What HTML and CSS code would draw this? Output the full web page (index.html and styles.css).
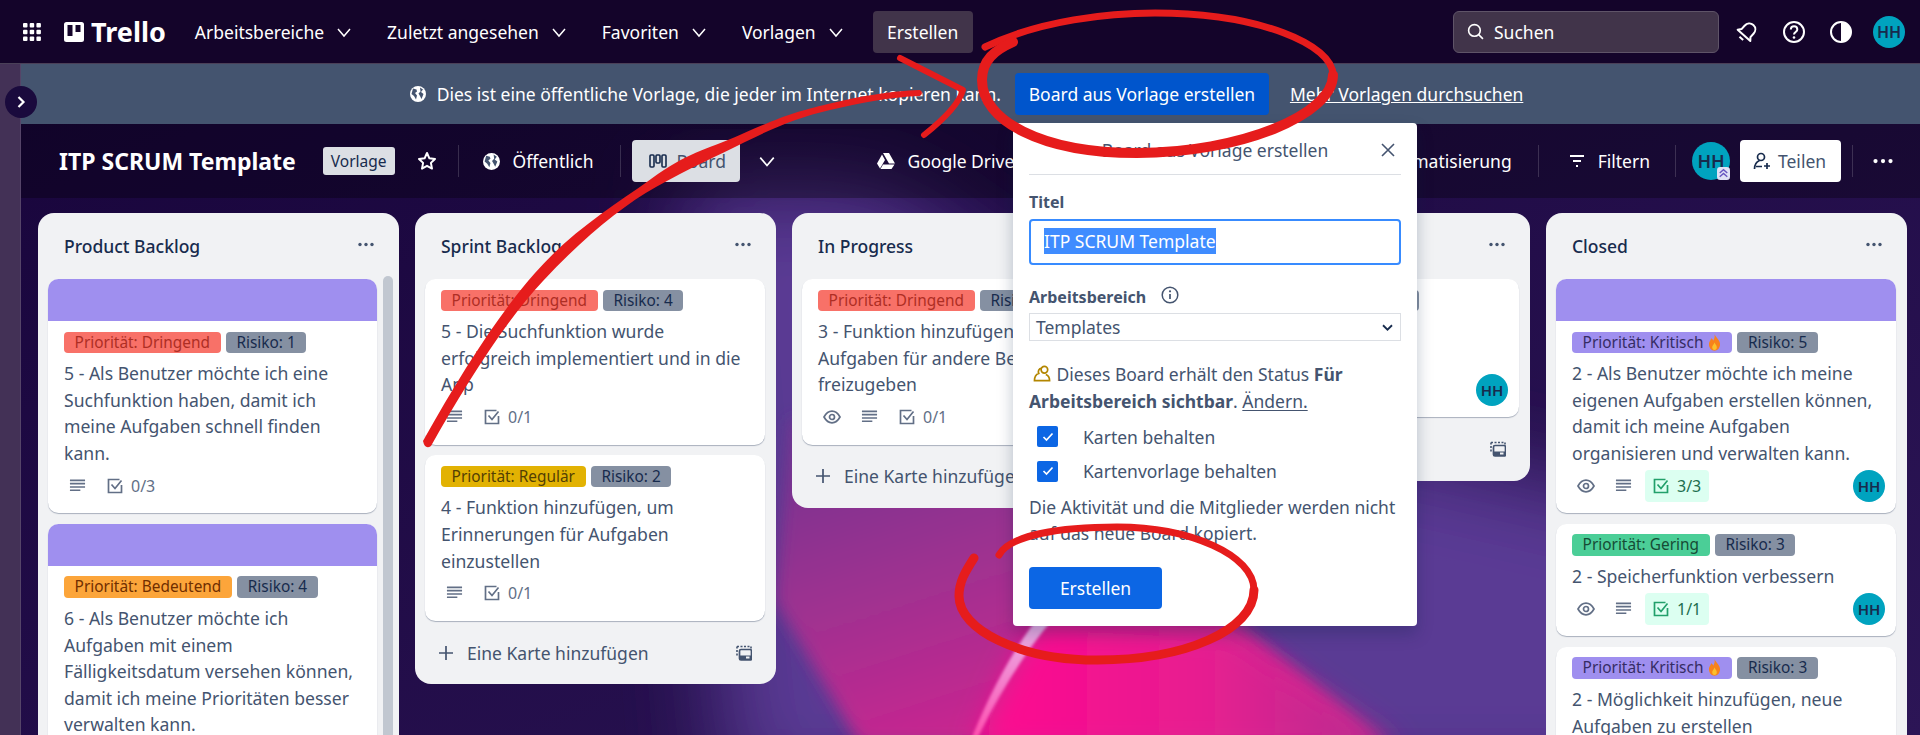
FILE: index.html
```html
<!DOCTYPE html>
<html lang="de">
<head>
  <meta charset="UTF-8" />
  <meta name="viewport" content="width=device-width, initial-scale=1" />
  <title>ITP SCRUM Template | Trello</title>
  <link rel="stylesheet" href="styles.css">
</head>
<body>
  <svg class="sprite" width="0" height="0">
    <symbol id="chev" viewBox="0 0 16 16"><path d="M2 5l6 7 6-7" fill="none" stroke="currentColor" stroke-width="1.5"/></symbol>
    <symbol id="globe" viewBox="0 0 16 16"><circle cx="8" cy="8" r="8" fill="currentColor"/><path d="M3 2.500l3.500 1 .5 2-2 1.500 2 2.500-1 4-2-3.500-2.500-2zM10 1.500l3 2-2 2.500 2.500 2-2 5-1.500-3-1.500-2.500 2-2z" fill="#44546f"/></symbol>
    <symbol id="desc" viewBox="0 0 18 16"><path d="M1 2h16M1 5.500h16M1 9h16M1 12.500h11" fill="none" stroke="currentColor" stroke-width="1.700"/></symbol>
    <symbol id="check" viewBox="0 0 16 16"><path d="M14.500 7v7.500h-13v-13h11" fill="none" stroke="currentColor" stroke-width="1.700"/><path d="M4.500 6.500l3.500 4 6.500-8" fill="none" stroke="currentColor" stroke-width="1.700"/></symbol>
    <symbol id="eye" viewBox="0 0 18 14"><path d="M1 7c2-3.600 4.800-5.800 8-5.800S15 3.400 17 7c-2 3.600-4.800 5.800-8 5.800S3 10.600 1 7z" fill="none" stroke="currentColor" stroke-width="1.700"/><circle cx="9" cy="7" r="2.500" fill="none" stroke="currentColor" stroke-width="1.700"/></symbol>
    <symbol id="dots" viewBox="0 0 16 4"><circle cx="2" cy="2" r="1.700" fill="currentColor"/><circle cx="8" cy="2" r="1.700" fill="currentColor"/><circle cx="14" cy="2" r="1.700" fill="currentColor"/></symbol>
    <symbol id="plus" viewBox="0 0 16 16"><path d="M8 1v14M1 8h14" fill="none" stroke="currentColor" stroke-width="1.700"/></symbol>
    <symbol id="tmpl" viewBox="0 0 16 16"><path d="M1 1.500h14M1 1.500v10M15 1.500v3" fill="none" stroke="currentColor" stroke-width="1.600" stroke-dasharray="2 1.500"/><rect x="3.500" y="4.500" width="12" height="10.500" rx="1.500" fill="none" stroke="currentColor" stroke-width="1.700"/><rect x="3.500" y="10.500" width="12" height="4.500" fill="currentColor"/><rect x="10" y="11.500" width="3.500" height="2" fill="#f1f2f4"/></symbol>
    <symbol id="flame" viewBox="0 0 14 18"><path d="M7 0c1 3 6 6 6 11 0 4-3 7-6 7s-6-3-6-7c0-3 2-4 2.500-6.500C5 5.500 5.500 6.500 5.500 7 7 5 7.500 3 7 0z" fill="#f7821b"/><path d="M7 9c.5 1.500 2.500 3 2.500 5S8.500 17 7 17s-2.500-1.500-2.500-3S6.500 11 7 9z" fill="#fbc02d"/></symbol>
  </svg>

  <svg class="backdrop" viewBox="0 0 1920 735" preserveAspectRatio="none">
    <defs>
      <linearGradient id="baseBg" x1="0" y1="0" x2="1" y2="1">
        <stop offset="0" stop-color="#17043a"/>
        <stop offset="1" stop-color="#2c1556"/>
      </linearGradient>
      <linearGradient id="magentaBg" x1="0" y1="0" x2="0.6" y2="1">
        <stop offset="0" stop-color="#6f3590"/>
        <stop offset="0.55" stop-color="#a82f90"/>
        <stop offset="1" stop-color="#d9208f"/>
      </linearGradient>
      <linearGradient id="pinkBg" x1="0" y1="0" x2="1" y2="0">
        <stop offset="0" stop-color="#ff0590"/>
        <stop offset="0.55" stop-color="#e61f90"/>
        <stop offset="1" stop-color="#b02f90"/>
      </linearGradient>
      <linearGradient id="finBg" x1="0" y1="0" x2="0" y2="1">
        <stop offset="0" stop-color="#e8b4ea"/>
        <stop offset="1" stop-color="#ff50b0"/>
      </linearGradient>
      <filter id="blurBig"><feGaussianBlur stdDeviation="45"/></filter>
      <filter id="blurMid"><feGaussianBlur stdDeviation="14"/></filter>
      <filter id="blurSoft"><feGaussianBlur stdDeviation="8"/></filter>
      <filter id="blurFin"><feGaussianBlur stdDeviation="1.500"/></filter>
    </defs>
    <rect width="1920" height="735" fill="url(#baseBg)"/>
    <polygon points="680,190 880,190 1180,400 1800,540 1800,800 730,800" fill="#5a3a94" filter="url(#blurBig)"/>
    <polygon points="790,420 1040,440 1240,625 1385,745 860,745 775,600" fill="url(#magentaBg)" filter="url(#blurSoft)"/>
    <path d="M1040 620 L1225 630 L1400 750 L975 750 Q1010 665 1040 620z" fill="url(#pinkBg)" filter="url(#blurMid)"/>
    <path d="M1036 620 Q1000 668 972 737 L978 737 Q1012 668 1052 620z" fill="url(#finBg)" filter="url(#blurFin)"/>
  </svg>

  <header class="topbar">
    <svg class="grid-icon" viewBox="0 0 18 18"><g fill="#fff"><rect width="4.500" height="4.500" rx="1"/><rect x="6.700" width="4.500" height="4.500" rx="1"/><rect x="13.400" width="4.500" height="4.500" rx="1"/><rect y="6.700" width="4.500" height="4.500" rx="1"/><rect x="6.700" y="6.700" width="4.500" height="4.500" rx="1"/><rect x="13.400" y="6.700" width="4.500" height="4.500" rx="1"/><rect y="13.400" width="4.500" height="4.500" rx="1"/><rect x="6.700" y="13.400" width="4.500" height="4.500" rx="1"/><rect x="13.400" y="13.400" width="4.500" height="4.500" rx="1"/></g></svg>
    <div class="logo">
      <svg viewBox="0 0 20 20"><path fill-rule="evenodd" d="M2.500 0h15A2.500 2.500 0 0 1 20 2.500v15a2.500 2.500 0 0 1-2.500 2.500h-15A2.500 2.500 0 0 1 0 17.500v-15A2.500 2.500 0 0 1 2.500 0zM3.500 3v11h5V3zM11.500 3v7h5V3z" fill="#fff"/></svg>
      <span>Trello</span>
    </div>
    <nav class="nav">
      <a>Arbeitsbereiche <svg><use href="#chev"/></svg></a>
      <a>Zuletzt angesehen <svg><use href="#chev"/></svg></a>
      <a>Favoriten <svg><use href="#chev"/></svg></a>
      <a>Vorlagen <svg><use href="#chev"/></svg></a>
    </nav>
    <button class="create-btn">Erstellen</button>
    <div class="search">
      <svg viewBox="0 0 16 16"><circle cx="7" cy="7" r="5.500" fill="none" stroke="currentColor" stroke-width="1.500"/><path d="M11 11l4 4" stroke="currentColor" stroke-width="1.500"/></svg>
      <span>Suchen</span>
    </div>
    <svg class="top-icon bell" viewBox="0 0 22 22"><g fill="none" stroke="#fff" stroke-width="2" stroke-linejoin="round" transform="rotate(42 11 11)"><path d="M11 1.500c-3.700 0-6 3-6 6.500v4.500l-2.500 3h17l-2.500-3V8c0-3.500-2.300-6.500-6-6.500z"/><path d="M8.500 19.500h5"/></g></svg>
    <svg class="top-icon" viewBox="0 0 22 22"><circle cx="11" cy="11" r="10" fill="none" stroke="#fff" stroke-width="2"/><path d="M7.800 8.500c0-4.300 6.500-4.300 6.500 0 0 2.500-3.300 2.500-3.300 5" fill="none" stroke="#fff" stroke-width="2"/><circle cx="11" cy="16.500" r="1.300" fill="#fff"/></svg>
    <svg class="top-icon" viewBox="0 0 22 22"><circle cx="11" cy="11" r="10" fill="none" stroke="#fff" stroke-width="2"/><path d="M11 1a10 10 0 0 1 0 20z" fill="#fff"/></svg>
    <div class="avatar avatar-top">HH</div>
  </header>

  <div class="layout">
    <aside class="sidebar"></aside>
    <button class="side-toggle"><svg viewBox="0 0 10 14"><path d="M2.500 2l5 5-5 5" fill="none" stroke="#fff" stroke-width="2.200"/></svg></button>

    <main class="main">
      <div class="banner">
        <svg class="banner-globe"><use href="#globe"/></svg>
        <span>Dies ist eine öffentliche Vorlage, die jeder im Internet kopieren kann.</span>
        <button class="banner-btn">Board aus Vorlage erstellen</button>
        <a class="banner-link">Mehr Vorlagen durchsuchen</a>
      </div>

      <div class="boardbar">
        <h1 class="board-title">ITP SCRUM Template</h1>
        <span class="badge">Vorlage</span>
        <svg class="star" viewBox="0 0 20 20"><path d="M10 2l2.400 5.300 5.600.700-4.100 3.900 1.100 5.700-5-2.800-5 2.800 1.100-5.700L2 8l5.600-.7z" fill="none" stroke="#fff" stroke-width="2" stroke-linejoin="round"/></svg>
        <i class="sep"></i>
        <svg class="bar-globe"><use href="#globe"/></svg>
        <span class="bar-text">Öffentlich</span>
        <i class="sep sep-b"></i>
        <button class="board-btn">
          <svg viewBox="0 0 18 14"><g fill="none" stroke="#172b4d" stroke-width="1.600"><rect x="1" y="1" width="4" height="12" rx="1"/><rect x="7" y="1" width="4" height="8" rx="1"/><rect x="13" y="1" width="4" height="12" rx="1"/></g></svg>
          <span>Board</span>
        </button>
        <svg class="bar-chev"><use href="#chev"/></svg>
        <svg class="drive" viewBox="0 0 18 16"><path d="M6 0h6l6 10.500h-6zM5 1.500L8 7 3 15.500 0 10.500zM6 11.500h11.500l-3 4.500H3.500z" fill="#fff"/></svg>
        <span class="bar-text">Google Drive</span>

        <div class="bar-right">
          <span class="bar-text">Automatisierung</span>
          <i class="sep sep-auto"></i>
          <svg class="filter-icon" viewBox="0 0 16 14"><path d="M1 2h14M4 7h8M7 12h2" fill="none" stroke="#fff" stroke-width="1.800"/></svg>
          <span class="bar-text">Filtern</span>
          <i class="sep sep-filter"></i>
          <div class="avatar avatar-bar">HH
            <svg class="admin-chip" viewBox="0 0 12 12"><rect width="12" height="12" rx="3" fill="#dfe1f5"/><path d="M2.500 5.500L6 2.500l3.500 3M2.500 9L6 6l3.500 3" fill="none" stroke="#6554c0" stroke-width="1.300"/></svg>
          </div>
          <button class="share-btn">
            <svg viewBox="0 0 18 18"><g fill="none" stroke="#172b4d" stroke-width="1.700"><circle cx="8" cy="5" r="3.500"/><path d="M1.500 17c0-4.500 1.500-7 5-8.500M9 14.500h-6"/><path d="M14 11v6M11 14h6"/></g></svg>
            <span>Teilen</span>
          </button>
          <i class="sep sep-share"></i>
          <svg class="bar-dots"><use href="#dots"/></svg>
        </div>
      </div>

      <div class="lists">
        <section class="list">
          <div class="list-head"><h2>Product Backlog</h2><svg><use href="#dots"/></svg></div>
          <div class="list-scroll">
            <div class="scroll-cards">
              <article class="card">
                <div class="cover"></div>
                <div class="card-body">
                  <div class="labels"><span class="label red">Priorität: Dringend</span><span class="label grey">Risiko: 1</span></div>
                  <p>5 - Als Benutzer möchte ich eine Suchfunktion haben, damit ich meine Aufgaben schnell finden kann.</p>
                  <div class="meta"><svg class="m-ico"><use href="#desc"/></svg><span class="pill"><svg><use href="#check"/></svg>0/3</span></div>
                </div>
              </article>
              <article class="card">
                <div class="cover"></div>
                <div class="card-body">
                  <div class="labels"><span class="label orange">Priorität: Bedeutend</span><span class="label grey">Risiko: 4</span></div>
                  <p>6 - Als Benutzer möchte ich Aufgaben mit einem Fälligkeitsdatum versehen können, damit ich meine Prioritäten besser verwalten kann.</p>
                </div>
              </article>
            </div>
            <div class="scrollbar"></div>
          </div>
        </section>

        <section class="list">
          <div class="list-head"><h2>Sprint Backlog</h2><svg><use href="#dots"/></svg></div>
          <article class="card">
            <div class="card-body">
              <div class="labels"><span class="label red">Priorität: Dringend</span><span class="label grey">Risiko: 4</span></div>
              <p>5 - Die Suchfunktion wurde erfolgreich implementiert und in die App</p>
              <div class="meta"><svg class="m-ico"><use href="#desc"/></svg><span class="pill"><svg><use href="#check"/></svg>0/1</span></div>
            </div>
          </article>
          <article class="card">
            <div class="card-body">
              <div class="labels"><span class="label yellow">Priorität: Regulär</span><span class="label grey">Risiko: 2</span></div>
              <p>4 - Funktion hinzufügen, um Erinnerungen für Aufgaben einzustellen</p>
              <div class="meta"><svg class="m-ico"><use href="#desc"/></svg><span class="pill"><svg><use href="#check"/></svg>0/1</span></div>
            </div>
          </article>
          <div class="add-row"><svg class="add-plus"><use href="#plus"/></svg><span>Eine Karte hinzufügen</span><svg class="add-tmpl"><use href="#tmpl"/></svg></div>
        </section>

        <section class="list">
          <div class="list-head"><h2>In Progress</h2><svg><use href="#dots"/></svg></div>
          <article class="card">
            <div class="card-body">
              <div class="labels"><span class="label red">Priorität: Dringend</span><span class="label grey">Risiko: 3</span></div>
              <p>3 - Funktion hinzufügen, um Aufgaben für andere Benutzer freizugeben</p>
              <div class="meta"><svg class="m-ico m-eye"><use href="#eye"/></svg><svg class="m-ico"><use href="#desc"/></svg><span class="pill"><svg><use href="#check"/></svg>0/1</span></div>
            </div>
          </article>
          <div class="add-row"><svg class="add-plus"><use href="#plus"/></svg><span>Eine Karte hinzufügen</span><svg class="add-tmpl"><use href="#tmpl"/></svg></div>
        </section>

        <!-- this list sits behind the popover, only its right edge shows -->
        <section class="list">
          <div class="list-head list-head-end"><svg><use href="#dots"/></svg></div>
          <article class="card">
            <div class="card-body">
              <div class="labels"><span class="label grey label-blank"></span></div>
              <div class="blank-text"></div>
              <div class="meta"><div class="avatar avatar-card">HH</div></div>
            </div>
          </article>
          <div class="add-row add-row-end"><svg class="add-tmpl"><use href="#tmpl"/></svg></div>
        </section>

        <section class="list">
          <div class="list-head"><h2>Closed</h2><svg><use href="#dots"/></svg></div>
          <article class="card">
            <div class="cover"></div>
            <div class="card-body">
              <div class="labels"><span class="label purple">Priorität: Kritisch<svg class="flame"><use href="#flame"/></svg></span><span class="label grey">Risiko: 5</span></div>
              <p>2 - Als Benutzer möchte ich meine eigenen Aufgaben erstellen können, damit ich meine Aufgaben organisieren und verwalten kann.</p>
              <div class="meta"><svg class="m-ico m-eye"><use href="#eye"/></svg><svg class="m-ico"><use href="#desc"/></svg><span class="pill done"><svg><use href="#check"/></svg>3/3</span><div class="avatar avatar-card">HH</div></div>
            </div>
          </article>
          <article class="card">
            <div class="card-body">
              <div class="labels"><span class="label green">Priorität: Gering</span><span class="label grey">Risiko: 3</span></div>
              <p>2 - Speicherfunktion verbessern</p>
              <div class="meta"><svg class="m-ico m-eye"><use href="#eye"/></svg><svg class="m-ico"><use href="#desc"/></svg><span class="pill done"><svg><use href="#check"/></svg>1/1</span><div class="avatar avatar-card">HH</div></div>
            </div>
          </article>
          <article class="card">
            <div class="card-body">
              <div class="labels"><span class="label purple">Priorität: Kritisch<svg class="flame"><use href="#flame"/></svg></span><span class="label grey">Risiko: 3</span></div>
              <p>2 - Möglichkeit hinzufügen, neue Aufgaben zu erstellen</p>
            </div>
          </article>
        </section>
      </div>
    </main>
  </div>

  <!-- Popover -->
  <div class="modal">
    <div class="modal-head">
      <span>Board aus Vorlage erstellen</span>
      <svg viewBox="0 0 14 14"><path d="M1 1l12 12M13 1L1 13" fill="none" stroke="currentColor" stroke-width="1.600"/></svg>
    </div>
    <label class="field-label">Titel</label>
    <div class="title-input"><span>ITP SCRUM Template</span></div>
    <div class="field-label ws-label">
      Arbeitsbereich
      <svg viewBox="0 0 18 18"><circle cx="9" cy="9" r="7.800" fill="none" stroke="#44546f" stroke-width="1.500"/><path d="M9 8v5" stroke="#44546f" stroke-width="1.700"/><circle cx="9" cy="5.300" r="1.100" fill="#44546f"/></svg>
    </div>
    <div class="select">
      <span>Templates</span>
      <svg viewBox="0 0 14 10"><path d="M2 2.500l5 5 5-5" fill="none" stroke="#172b4d" stroke-width="2"/></svg>
    </div>
    <p class="status">
      <svg viewBox="0 0 20 18"><g fill="none" stroke="#b38600" stroke-width="1.800"><circle cx="12" cy="5" r="3.500"/><path d="M9 3.500C6 3.500 5 7 6 9 3 10 1.500 13 1.500 16.500h16c0-3-1.500-5.500-4-6.500"/></g></svg>
      Dieses Board erhält den Status <b>Für Arbeitsbereich sichtbar</b>. <u>Ändern.</u>
    </p>
    <div class="check-row"><span class="box"><svg viewBox="0 0 12 10"><path d="M1.500 5l3 3 6-6.500" fill="none" stroke="#fff" stroke-width="1.700"/></svg></span>Karten behalten</div>
    <div class="check-row"><span class="box"><svg viewBox="0 0 12 10"><path d="M1.500 5l3 3 6-6.500" fill="none" stroke="#fff" stroke-width="1.700"/></svg></span>Kartenvorlage behalten</div>
    <p class="note">Die Aktivität und die Mitglieder werden nicht auf das neue Board kopiert.</p>
    <button class="submit">Erstellen</button>
  </div>

  <!-- Hand drawn markers on top of the screenshot -->
  <svg class="marks" viewBox="0 0 1920 735">
    <g fill="#e61c1c">
      <path d="M423 441 C 460 375, 497 316, 535 273 S 612 207, 651 179 S 701 152, 742 134 S 795 112, 828 104 S 890 91, 920 90 Q 924 93 920 96 C 890 97, 860 103, 830 110 S 775 127, 745 142 S 690 168, 656 187 S 583 238, 543 281 S 464 388, 431 446 Q 425 450 423 441z"/>
    </g>
    <g fill="none" stroke="#e61c1c" stroke-linecap="round" stroke-linejoin="round">
      <path d="M900 58 L963 90 Q958 108 924 135" stroke-width="6"/>
      <path d="M985 47 C 1040 20, 1110 13, 1155 13 C 1260 13, 1333 45, 1333 75" stroke-width="7"/>
      <path d="M1333 75 C 1333 115, 1240 153, 1137 153 C 1040 153, 982 120, 982 80 C 982 60, 995 50, 1013 42" stroke-width="10"/>
      <path d="M974 558 C 965 572, 959 582, 959 596 C 959 630, 1020 660, 1097 660 C 1185 660, 1254 630, 1254 590" stroke-width="9"/>
      <path d="M1254 590 C 1254 555, 1190 527, 1117 527 C 1060 527, 1010 535, 999 555" stroke-width="7"/>
    </g>
  </svg>
</body>
</html>
```

FILE: styles.css
```css
* {
  box-sizing: border-box;
}

body {
  margin: 0;
  height: 735px;
  overflow: hidden;
  position: relative;
  font-family: "Noto Sans", "Open Sans", sans-serif;
  font-size: 17.5px;
  color: #44546f;
  background-color: #17043a;
}

button {
  border: none;
  font-family: inherit;
  font-size: 17.5px;
}

.sprite {
  position: absolute;
}

.backdrop {
  position: absolute;
  left: 0;
  top: 0;
  width: 1920px;
  height: 735px;
}

.marks {
  position: absolute;
  left: 0;
  top: 0;
  width: 1920px;
  height: 735px;
  pointer-events: none;
}

/* top bar */
.topbar {
  position: relative;
  height: 64px;
  display: flex;
  align-items: center;
  padding-left: 23px;
  background-color: #14042a;
  border-bottom: 1px solid #4a4058;
  color: #fff;
}

.grid-icon {
  width: 18px;
  height: 18px;
}

.logo {
  display: flex;
  align-items: center;
  margin-left: 23px;
  gap: 7px;
  font-size: 27px;
  font-weight: 700;
}

.logo svg {
  width: 20px;
  height: 20px;
}

.nav {
  display: flex;
  margin-left: 29px;
  gap: 35px;
}

.nav a {
  display: flex;
  align-items: center;
  gap: 12px;
}

.nav svg {
  width: 16px;
  height: 16px;
}

.create-btn {
  margin-left: 29px;
  width: 100px;
  height: 42px;
  border-radius: 4px;
  color: #fff;
  background-color: #41344a;
}

.search {
  display: flex;
  align-items: center;
  gap: 10px;
  width: 266px;
  height: 42px;
  margin-left: auto;
  padding-left: 13px;
  border: 1px solid #5f5468;
  border-radius: 6px;
  background-color: #41344a;
}

.search svg {
  width: 17px;
  height: 17px;
}

.top-icon {
  width: 22px;
  height: 22px;
  margin-left: 25px;
}

.top-icon.bell {
  margin-left: 17px;
}

.avatar {
  display: flex;
  align-items: center;
  justify-content: center;
  border-radius: 50%;
  background-color: #00a3bf;
  color: #172b4d;
  font-size: 16px;
  font-weight: 600;
}

.avatar-top {
  width: 32px;
  height: 32px;
  margin: 0 15px 0 21px;
}

/* page below the top bar */
.layout {
  position: relative;
  display: flex;
  height: 671px;
}

.sidebar {
  width: 21px;
  background-color: #433156;
  border-right: 1px solid #554468;
}

.side-toggle {
  position: absolute;
  left: 5px;
  top: 22px;
  width: 32px;
  height: 32px;
  padding: 0;
  display: flex;
  align-items: center;
  justify-content: center;
  border-radius: 50%;
  background-color: #1a0a3d;
}

.side-toggle svg {
  width: 10px;
  height: 14px;
}

.main {
  flex: 1;
  min-width: 0;
}

.banner {
  display: flex;
  align-items: center;
  justify-content: center;
  height: 60px;
  padding-right: 8px;
  background-color: #44546f;
  color: #fff;
}

.banner-globe {
  width: 16px;
  height: 16px;
  margin-right: 11px;
  color: #fff;
}

.banner-btn {
  width: 254px;
  height: 42px;
  margin-left: 14px;
  border-radius: 4px;
  background-color: #0055cc;
  color: #fff;
}

.banner-link {
  margin-left: 21px;
  text-decoration: underline;
}

.boardbar {
  display: flex;
  align-items: center;
  height: 74px;
  padding-left: 38px;
  background-color: rgba(0, 0, 0, 0.3);
  color: #fff;
}

.board-title {
  margin: 0;
  font-size: 23px;
  font-weight: 700;
}

.badge {
  margin-left: 27px;
  padding: 0 8px;
  height: 28px;
  line-height: 28px;
  border-radius: 3px;
  background-color: #dcdfe4;
  color: #172b4d;
  font-size: 15.500px;
}

.star {
  width: 20px;
  height: 20px;
  margin-left: 22px;
}

.sep {
  width: 1px;
  height: 32px;
  margin-left: 21px;
  background-color: rgba(255, 255, 255, 0.16);
}

.bar-globe {
  width: 17px;
  height: 17px;
  margin: 0 13px 0 24px;
}

.sep-b {
  margin-left: 27px;
}

.board-btn {
  display: flex;
  align-items: center;
  gap: 9px;
  width: 108px;
  height: 42px;
  margin-left: 11px;
  padding-left: 17px;
  border-radius: 4px;
  background-color: #dcdfe4;
  color: #44546f;
}

.board-btn svg {
  width: 18px;
  height: 14px;
}

.bar-chev {
  width: 18px;
  height: 18px;
  margin-left: 18px;
}

.drive {
  width: 18px;
  height: 16px;
  margin: 0 12px 0 101px;
}

.bar-right {
  display: flex;
  align-items: center;
  margin-left: auto;
  padding-right: 27px;
}

.sep-auto {
  margin-left: 26px;
}

.filter-icon {
  width: 16px;
  height: 14px;
  margin: 0 13px 0 30px;
}

.sep-filter {
  margin-left: 25px;
}

.avatar-bar {
  position: relative;
  width: 38px;
  height: 38px;
  margin-left: 16px;
  font-size: 18px;
}

.admin-chip {
  position: absolute;
  right: 0;
  bottom: 0;
  width: 13px;
  height: 13px;
}

.share-btn {
  display: flex;
  align-items: center;
  gap: 7px;
  width: 101px;
  height: 42px;
  margin-left: 10px;
  padding-left: 13px;
  border-radius: 4px;
  background-color: #fff;
  color: #44546f;
}

.share-btn svg {
  width: 18px;
  height: 18px;
}

.sep-share {
  margin-left: 11px;
}

.bar-dots {
  width: 20px;
  height: 6px;
  margin-left: 20px;
}

/* lists */
.lists {
  display: flex;
  align-items: flex-start;
  gap: 16px;
  padding: 15px 0 0 16.5px;
}

.list {
  flex: none;
  width: 361px;
  padding: 0 10.5px 1px;
  border-radius: 16px;
  background-color: #f1f2f4;
}

.list-head {
  display: flex;
  align-items: center;
  justify-content: space-between;
  height: 66px;
  padding: 0 14px 0 16px;
  color: #172b4d;
}

.list-head-end {
  justify-content: flex-end;
}

.list-head h2 {
  margin: 0;
  font-size: 17.5px;
  font-weight: 500;
}

.list-head svg {
  width: 16px;
  height: 5px;
  margin-top: -4px;
  color: #44546f;
}

.list-scroll {
  display: flex;
  gap: 6px;
}

.scroll-cards {
  flex: 1;
  min-width: 0;
}

.scrollbar {
  flex: none;
  width: 10px;
  height: 470px;
  margin-top: -3px;
  margin-right: -5px;
  border-radius: 5px;
  background-color: #c1c7d0;
}

.card {
  margin-bottom: 10.6px;
  overflow: hidden;
  border-radius: 10.5px;
  background-color: #fff;
  box-shadow: 0 1px 1px #a9b0bd;
}

.cover {
  height: 42px;
  background-color: #9f8fef;
}

.card-body {
  padding: 10.5px 16px 11.5px;
}

.card-body p {
  margin: 7.5px 0 3px;
  font-size: 17.6px;
  line-height: 26.6px;
}

.blank-text {
  height: 63.2px;
}

.labels {
  display: flex;
  gap: 5.3px;
}

.label {
  display: flex;
  align-items: center;
  height: 21.3px;
  padding: 0 10.6px;
  border-radius: 4px;
  font-size: 15.4px;
}

.label-blank {
  width: 224px;
}

.label.red { background-color: #f87168; color: #ae2e24; }
.label.orange { background-color: #fca53a; color: #702e00; }
.label.yellow { background-color: #e2b203; color: #533f04; }
.label.green { background-color: #4bce97; color: #164b35; }
.label.purple { background-color: #9f8fef; color: #352c63; }
.label.grey { background-color: #8590a2; color: #172b4d; }

.flame {
  width: 13px;
  height: 17px;
  margin-left: 5px;
}

.meta {
  display: flex;
  align-items: center;
  height: 32px;
  color: #626f86;
  font-size: 16px;
}

.m-ico {
  flex: none;
  width: 17px;
  height: 16px;
  margin: 0 13px 0 5px;
}

.m-eye {
  width: 18px;
  height: 14px;
  margin-right: 15px;
}

.pill {
  display: flex;
  align-items: center;
  gap: 8px;
  height: 32px;
  padding: 0 8px;
  border-radius: 4px;
}

.pill svg {
  width: 16px;
  height: 16px;
}

.pill.done {
  background-color: #dcfff1;
  color: #216e4e;
}

.pill.done svg {
  color: #22a06b;
}

.avatar-card {
  width: 32px;
  height: 32px;
  margin-left: auto;
  margin-right: -5px;
  font-size: 15px;
}

.add-row {
  display: flex;
  align-items: center;
  height: 42.6px;
  margin: 7px 0 9px;
  padding: 0 7px 0 13px;
  color: #44546f;
}

.add-plus {
  width: 16px;
  height: 16px;
  margin-right: 13px;
}

.add-tmpl {
  width: 16px;
  height: 16px;
  margin-left: auto;
  margin-right: 6px;
}

/* popover */
.modal {
  position: absolute;
  left: 1013px;
  top: 122.5px;
  width: 404px;
  height: 503.5px;
  padding: 0 16px;
  border-radius: 4px;
  background-color: #fff;
  box-shadow: 0 8px 16px rgba(9, 30, 66, 0.25);
}

.modal-head {
  display: flex;
  align-items: center;
  justify-content: center;
  position: relative;
  height: 52.5px;
  padding-top: 3px;
  border-bottom: 1.300px solid #dcdfe4;
}

.modal-head svg {
  position: absolute;
  right: 6px;
  top: 20px;
  width: 14px;
  height: 14px;
}

.field-label {
  display: block;
  margin-top: 16.5px;
  font-size: 16px;
  line-height: 21px;
  font-weight: 700;
  color: #44546f;
}

.title-input {
  height: 46.3px;
  margin-top: 6px;
  padding: 7px 13px;
  border: 2.600px solid #388bff;
  border-radius: 4px;
}

.title-input span {
  display: inline-block;
  height: 26px;
  line-height: 26px;
  background-color: #3f8cff;
  color: #fff;
}

.ws-label {
  display: flex;
  align-items: center;
  gap: 15px;
  margin-top: 22.5px;
}

.ws-label svg {
  width: 18px;
  height: 18px;
  margin-top: -6px;
}

.select {
  display: flex;
  align-items: center;
  justify-content: space-between;
  height: 28px;
  margin-top: 5px;
  padding: 0 6px;
  border: 1.300px solid #dcdfe4;
}

.select svg {
  width: 13px;
  height: 9px;
}

.status {
  margin: 20px 0 0;
  line-height: 26.6px;
}

.status svg {
  width: 19px;
  height: 17px;
  margin-left: 4px;
  vertical-align: -1px;
}

.status u {
  text-underline-offset: 2px;
}

.check-row {
  display: flex;
  align-items: center;
  height: 21px;
  margin-top: 12px;
  padding-left: 8px;
}

.check-row + .check-row {
  margin-top: 13.4px;
}

.box {
  display: flex;
  align-items: center;
  justify-content: center;
  width: 21px;
  height: 21px;
  margin-right: 25px;
  border-radius: 2px;
  background-color: #0c66e4;
}

.box svg {
  width: 12px;
  height: 10px;
}

.note {
  margin: 12px 0 0;
  line-height: 26.6px;
}

.submit {
  display: block;
  width: 133px;
  height: 42px;
  margin-top: 20px;
  border-radius: 4px;
  background-color: #0c66e4;
  color: #fff;
}
```
